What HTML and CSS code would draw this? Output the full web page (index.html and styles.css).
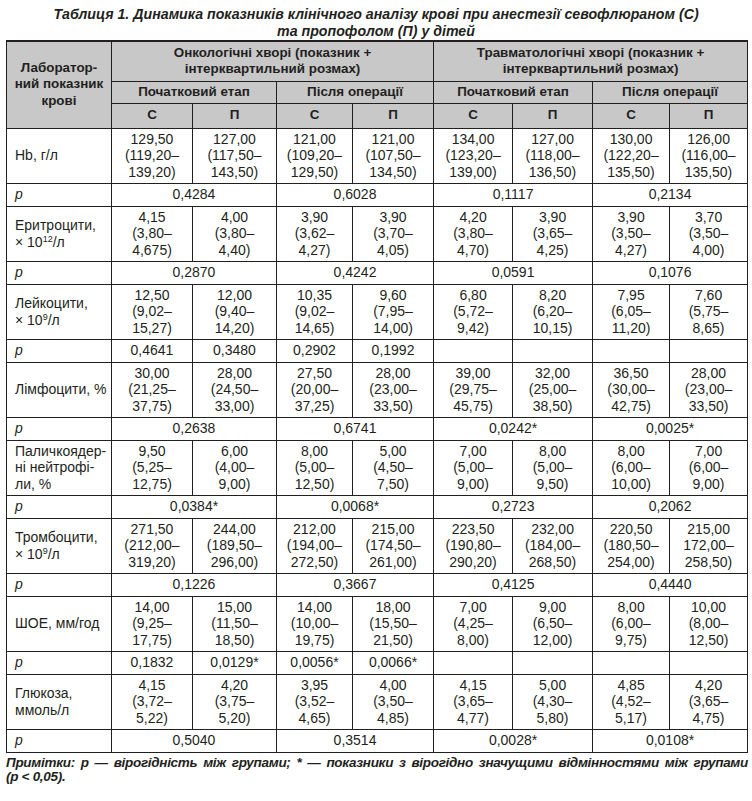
FILE: index.html
```html
<!DOCTYPE html>
<html lang="uk">
<head>
<meta charset="utf-8">
<link rel="stylesheet" href="styles.css">
</head>
<body>
<div class="page">
  <h1 class="title">Таблиця 1. Динамика показників клінічного аналізу крові при анестезії севофлюраном (С)<br>та пропофолом (П) у дітей</h1>
  <table class="tbl">
    <colgroup>
      <col style="width:105px"><col style="width:81px"><col style="width:84px"><col style="width:76px"><col style="width:81px"><col style="width:79px"><col style="width:80px"><col style="width:77px"><col style="width:78px">
    </colgroup>
    <thead>
      <tr class="h1">
        <th rowspan="3">Лаборатор-<br>ний показник<br>крові</th>
        <th colspan="4">Онкологічні хворі (показник +<br>інтерквартильний розмах)</th>
        <th colspan="4">Травматологічні хворі (показник +<br>інтерквартильний розмах)</th>
      </tr>
      <tr class="h2">
        <th colspan="2">Початковий етап</th>
        <th colspan="2">Після операції</th>
        <th colspan="2">Початковий етап</th>
        <th colspan="2">Після операції</th>
      </tr>
      <tr class="h3">
        <th>С</th><th>П</th><th>С</th><th>П</th><th>С</th><th>П</th><th>С</th><th>П</th>
      </tr>
    </thead>
    <tbody>
      <tr class="d">
        <td class="lbl">Hb, г/л</td>
        <td>129,50<br>(119,20–<br>139,20)</td><td>127,00<br>(117,50–<br>143,50)</td><td>121,00<br>(109,20–<br>129,50)</td><td>121,00<br>(107,50–<br>134,50)</td>
        <td>134,00<br>(123,20–<br>139,00)</td><td>127,00<br>(118,00–<br>136,50)</td><td>130,00<br>(122,20–<br>135,50)</td><td>126,00<br>(116,00–<br>135,50)</td>
      </tr>
      <tr class="p">
        <td class="lbl"><i>p</i></td>
        <td colspan="2">0,4284</td><td colspan="2">0,6028</td><td colspan="2">0,1117</td><td colspan="2">0,2134</td>
      </tr>
      <tr class="d">
        <td class="lbl">Еритроцити,<br>× 10<sup>12</sup>/л</td>
        <td>4,15<br>(3,80–<br>4,675)</td><td>4,00<br>(3,80–<br>4,40)</td><td>3,90<br>(3,62–<br>4,27)</td><td>3,90<br>(3,70–<br>4,05)</td>
        <td>4,20<br>(3,80–<br>4,70)</td><td>3,90<br>(3,65–<br>4,25)</td><td>3,90<br>(3,50–<br>4,27)</td><td>3,70<br>(3,50–<br>4,00)</td>
      </tr>
      <tr class="p">
        <td class="lbl"><i>p</i></td>
        <td colspan="2">0,2870</td><td colspan="2">0,4242</td><td colspan="2">0,0591</td><td colspan="2">0,1076</td>
      </tr>
      <tr class="d">
        <td class="lbl">Лейкоцити,<br>× 10<sup>9</sup>/л</td>
        <td>12,50<br>(9,02–<br>15,27)</td><td>12,00<br>(9,40–<br>14,20)</td><td>10,35<br>(9,02–<br>14,65)</td><td>9,60<br>(7,95–<br>14,00)</td>
        <td>6,80<br>(5,72–<br>9,42)</td><td>8,20<br>(6,20–<br>10,15)</td><td>7,95<br>(6,05–<br>11,20)</td><td>7,60<br>(5,75–<br>8,65)</td>
      </tr>
      <tr class="p">
        <td class="lbl"><i>p</i></td>
        <td>0,4641</td><td>0,3480</td><td>0,2902</td><td>0,1992</td><td></td><td></td><td></td><td></td>
      </tr>
      <tr class="d">
        <td class="lbl">Лімфоцити, %</td>
        <td>30,00<br>(21,25–<br>37,75)</td><td>28,00<br>(24,50–<br>33,00)</td><td>27,50<br>(20,00–<br>37,25)</td><td>28,00<br>(23,00–<br>33,50)</td>
        <td>39,00<br>(29,75–<br>45,75)</td><td>32,00<br>(25,00–<br>38,50)</td><td>36,50<br>(30,00–<br>42,75)</td><td>28,00<br>(23,00–<br>33,50)</td>
      </tr>
      <tr class="p">
        <td class="lbl"><i>p</i></td>
        <td colspan="2">0,2638</td><td colspan="2">0,6741</td><td colspan="2">0,0242*</td><td colspan="2">0,0025*</td>
      </tr>
      <tr class="d">
        <td class="lbl">Паличкоядер-<br>ні нейтрофі-<br>ли, %</td>
        <td>9,50<br>(5,25–<br>12,75)</td><td>6,00<br>(4,00–<br>9,00)</td><td>8,00<br>(5,00–<br>12,50)</td><td>5,00<br>(4,50–<br>7,50)</td>
        <td>7,00<br>(5,00–<br>9,00)</td><td>8,00<br>(5,00–<br>9,50)</td><td>8,00<br>(6,00–<br>10,00)</td><td>7,00<br>(6,00–<br>9,00)</td>
      </tr>
      <tr class="p">
        <td class="lbl"><i>p</i></td>
        <td colspan="2">0,0384*</td><td colspan="2">0,0068*</td><td colspan="2">0,2723</td><td colspan="2">0,2062</td>
      </tr>
      <tr class="d">
        <td class="lbl">Тромбоцити,<br>× 10<sup>9</sup>/л</td>
        <td>271,50<br>(212,00–<br>319,20)</td><td>244,00<br>(189,50–<br>296,00)</td><td>212,00<br>(194,00–<br>272,50)</td><td>215,00<br>(174,50–<br>261,00)</td>
        <td>223,50<br>(190,80–<br>290,20)</td><td>232,00<br>(184,00–<br>268,50)</td><td>220,50<br>(180,50–<br>254,00)</td><td>215,00<br>172,00–<br>258,50)</td>
      </tr>
      <tr class="p">
        <td class="lbl"><i>p</i></td>
        <td colspan="2">0,1226</td><td colspan="2">0,3667</td><td colspan="2">0,4125</td><td colspan="2">0,4440</td>
      </tr>
      <tr class="d">
        <td class="lbl">ШОЕ, мм/год</td>
        <td>14,00<br>(9,25–<br>17,75)</td><td>15,00<br>(11,50–<br>18,50)</td><td>14,00<br>(10,00–<br>19,75)</td><td>18,00<br>(15,50–<br>21,50)</td>
        <td>7,00<br>(4,25–<br>8,00)</td><td>9,00<br>(6,50–<br>12,00)</td><td>8,00<br>(6,00–<br>9,75)</td><td>10,00<br>(8,00–<br>12,50)</td>
      </tr>
      <tr class="p">
        <td class="lbl"><i>p</i></td>
        <td>0,1832</td><td>0,0129*</td><td>0,0056*</td><td>0,0066*</td><td></td><td></td><td></td><td></td>
      </tr>
      <tr class="d">
        <td class="lbl">Глюкоза,<br>ммоль/л</td>
        <td>4,15<br>(3,72–<br>5,22)</td><td>4,20<br>(3,75–<br>5,20)</td><td>3,95<br>(3,52–<br>4,65)</td><td>4,00<br>(3,50–<br>4,85)</td>
        <td>4,15<br>(3,65–<br>4,77)</td><td>5,00<br>(4,30–<br>5,80)</td><td>4,85<br>(4,52–<br>5,17)</td><td>4,20<br>(3,65–<br>4,75)</td>
      </tr>
      <tr class="p">
        <td class="lbl"><i>p</i></td>
        <td colspan="2">0,5040</td><td colspan="2">0,3514</td><td colspan="2">0,0028*</td><td colspan="2">0,0108*</td>
      </tr>
    </tbody>
  </table>
  <p class="note">Примітки: p — вірогідність між групами; * — показники з вірогідно значущими відмінностями між групами <span class="nowrap">(p &lt; 0,05).</span></p>
</div>
</body>
</html>
```

FILE: styles.css
```css
html, body {
  margin: 0;
  padding: 0;
  background: #ffffff;
}

.page {
  width: 752px;
  font-family: "Liberation Sans", Arial, sans-serif;
  color: #231f20;
}

.title {
  margin: 0;
  padding-top: 6px;
  height: 34px;
  font-size: 14.2px;
  line-height: 17px;
  font-weight: bold;
  font-style: italic;
  text-align: center;
}

.tbl {
  margin-left: 6px;
  width: 741px;
  table-layout: fixed;
  border-collapse: collapse;
  font-size: 14px;
  line-height: 16.6px;
}

.tbl th,
.tbl td {
  border: 1px solid #231f20;
  padding: 0;
  text-align: center;
  vertical-align: middle;
}

.tbl thead th {
  background: #c8c8c8;
  font-weight: bold;
  font-size: 13.4px;
}

.tbl thead tr.h1 th {
  border-top: 2px solid #231f20;
}

.tbl tr.h1 { height: 40px; }
.tbl tr.h2 { height: 22px; }
.tbl tr.h3 { height: 25px; }
.tbl tr.d { height: 55px; }
.tbl tr.p { height: 23px; }

.tbl td.lbl {
  text-align: left;
  padding-left: 8px;
}

.tbl sup {
  font-size: 9px;
  line-height: 0;
  vertical-align: 5px;
}

.note {
  margin: 3px 4px 0 6px;
  font-size: 13.5px;
  line-height: 14px;
  font-weight: bold;
  font-style: italic;
  text-align: justify;
  letter-spacing: -0.3px;
}

.nowrap {
  white-space: nowrap;
}
```
